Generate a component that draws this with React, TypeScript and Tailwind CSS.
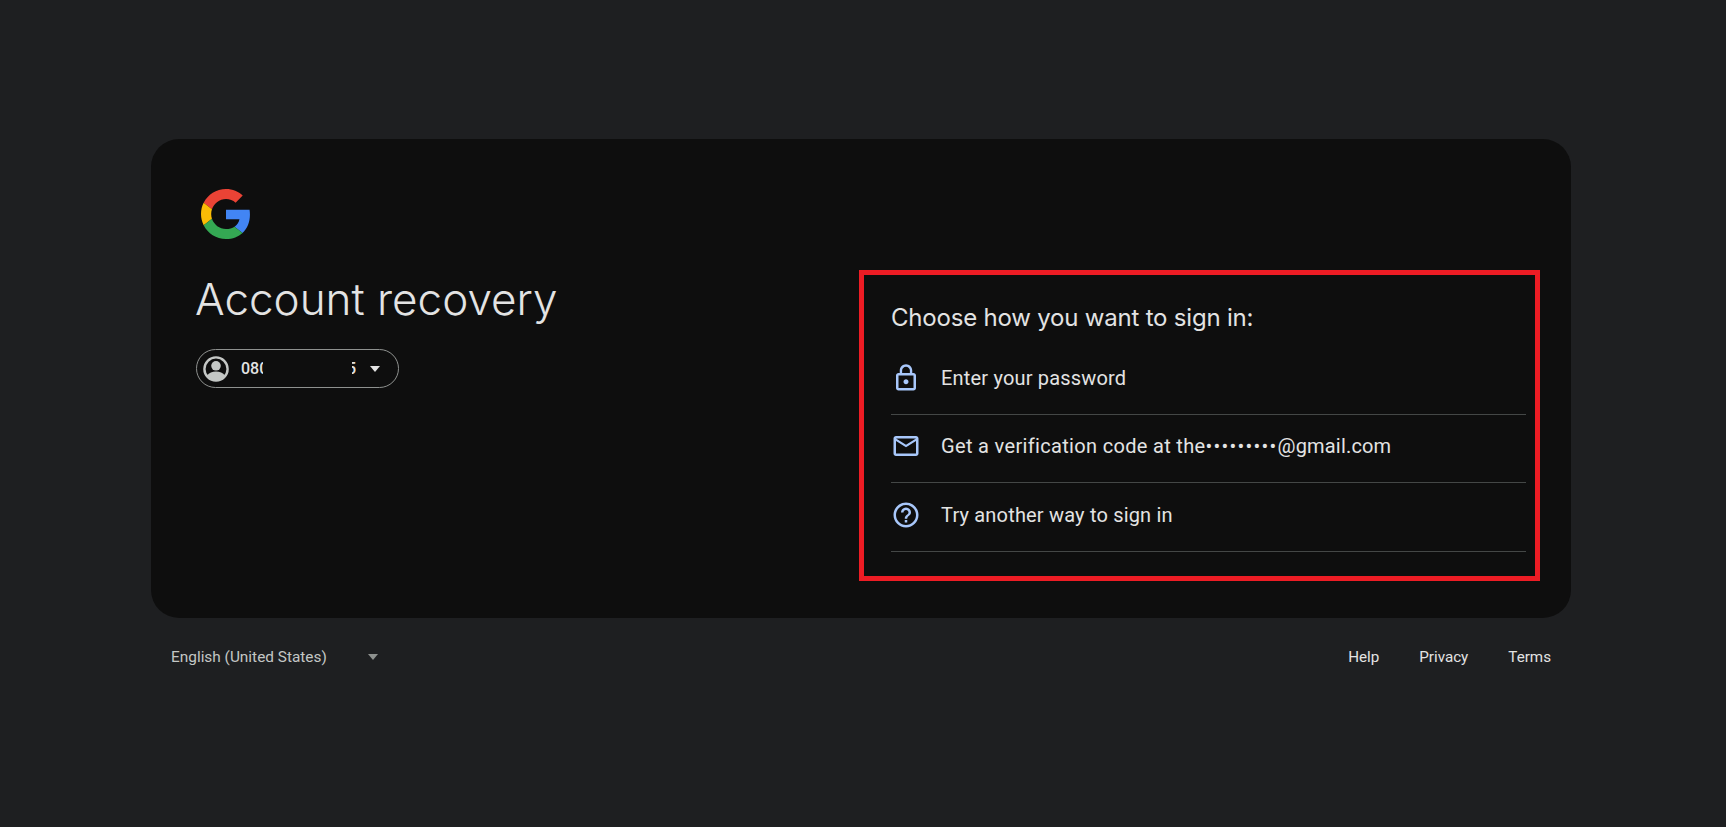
export default function App() {
  const rows = [
    {
      label: <>Enter your password</>,
      d: "M12 17c1.1 0 2-.9 2-2s-.9-2-2-2-2 .9-2 2 .9 2 2 2zm6-9h-1V6c0-2.76-2.24-5-5-5S7 3.24 7 6v2H6c-1.1 0-2 .9-2 2v10c0 1.1.9 2 2 2h12c1.1 0 2-.9 2-2V10c0-1.1-.9-2-2-2zM8.9 6c0-1.71 1.39-3.1 3.1-3.1s3.1 1.39 3.1 3.1v2H8.9V6zM18 20H6V10h12v10z",
    },
    {
      label: (
        <>
          <span className="tracking-[0.33px]">Get a verification code at the</span>
          <span className="tracking-[1.25px]">•••••••••</span>@gmail.com
        </>
      ),
      d: "M20 4H4c-1.1 0-1.99.9-1.99 2L2 18c0 1.1.9 2 2 2h16c1.1 0 2-.9 2-2V6c0-1.1-.9-2-2-2zm0 14H4V8l8 5 8-5v10zm-8-7L4 6h16l-8 5z",
    },
    {
      label: <>Try another way to sign in</>,
      d: "M11 18h2v-2h-2v2zm1-16C6.48 2 2 6.48 2 12s4.48 10 10 10 10-4.48 10-10S17.52 2 12 2zm0 18c-4.41 0-8-3.59-8-8s3.59-8 8-8 8 3.59 8 8-3.59 8-8 8zm0-14c-2.21 0-4 1.79-4 4h2c0-1.1.9-2 2-2s2 .9 2 2c0 2-3 1.75-3 5h2c0-2.25 3-2.5 3-5 0-2.21-1.79-4-4-4z",
    },
  ];

  return (
    <div className="min-h-screen bg-[#1e1f21] pt-[139px] pl-[151px] font-['Roboto',sans-serif] text-[#e3e3e3]">
      <div className="flex h-[479px] w-[1420px] items-start rounded-[28px] bg-[#0e0e0e] pl-[45px]">
        <div className="w-[663px] pt-[50px]">
          <svg viewBox="0 0 48 48" className="ml-[5px] block h-[50px] w-[50px]">
            <path fill="#EA4335" d="M24 9.5c3.54 0 6.71 1.22 9.21 3.6l6.85-6.85C35.9 2.38 30.47 0 24 0 14.62 0 6.51 5.38 2.56 13.22l7.98 6.19C12.43 13.72 17.74 9.5 24 9.5z" />
            <path fill="#4285F4" d="M46.98 24.55c0-1.57-.15-3.09-.38-4.55H24v9.02h12.94c-.58 2.96-2.26 5.48-4.78 7.18l7.73 6c4.51-4.18 7.09-10.36 7.09-17.65z" />
            <path fill="#FBBC05" d="M10.53 28.59c-.48-1.45-.76-2.99-.76-4.59s.27-3.14.76-4.59l-7.98-6.19C.92 16.46 0 20.12 0 24c0 3.88.92 7.54 2.56 10.78l7.97-6.19z" />
            <path fill="#34A853" d="M24 48c6.48 0 11.93-2.13 15.89-5.81l-7.73-6c-2.15 1.45-4.92 2.3-8.16 2.3-6.26 0-11.57-4.22-13.47-9.91l-7.98 6.19C6.51 42.62 14.62 48 24 48z" />
          </svg>
          <h1 className="mt-[32px] text-[44px] leading-[56px] font-light -ml-[1px] font-['Inter',sans-serif] whitespace-nowrap">
            Account recovery
          </h1>
          <div className="mt-[22px] flex h-[39px] w-[203px] items-center rounded-full border border-[#8e918f] pl-[6px] text-[16px] font-medium text-[#e3e3e3]">
            <svg viewBox="0 0 26 26" className="h-[26px] w-[26px] shrink-0">
              <circle cx="13" cy="13" r="11.6" fill="none" stroke="#c4c7c5" strokeWidth="2.4" />
              <circle cx="13" cy="9.800" r="4.800" fill="#c4c7c5" />
              <path d="M4 19.500c2-2.800 5.300-4 9-4s7 1.200 9 4c-2 3-5.200 5.500-9 5.500s-7-2.500-9-5.500z" fill="#c4c7c5" />
            </svg>
            <span className="ml-[12px] w-[22px] overflow-hidden whitespace-nowrap">080</span>
            <span className="ml-[89px] flex w-[4px] justify-end overflow-hidden">
              <span className="shrink-0">5</span>
            </span>
            <span className="ml-[14px] h-0 w-0 border-x-[5.5px] border-t-[6px] border-x-transparent border-t-[#e3e3e3]" />
          </div>
        </div>
        <div className="mt-[131px] h-[311px] w-[681px] border-[5px] border-[#ed1c24] pr-[9px] pl-[27px]">
          <h2 className="pt-[27px] pb-[12px] text-[24px] leading-[32px] font-normal tracking-[-0.2px] font-['Inter',sans-serif] whitespace-nowrap">
            Choose how you want to sign in:
          </h2>
          {rows.map((r, i) => (
            <div key={i} className="flex h-[68.67px] items-center border-b border-[#444746] pb-[4px]">
              <svg viewBox="0 0 24 24" className="h-[30px] w-[30px] shrink-0 fill-[#a8c7fa]">
                <path d={r.d} />
              </svg>
              <span className="ml-[20px] text-[20px] leading-[26px] tracking-[0.18px] whitespace-nowrap">{r.label}</span>
            </div>
          ))}
        </div>
      </div>
      <div className="flex w-[1420px] items-center justify-between px-[20px] pt-[29px] text-[15.4px] leading-[20px]">
        <div className="flex items-center">
          <span className="w-[197px] whitespace-nowrap text-[#c4c7c5]">English (United States)</span>
          <span className="h-0 w-0 border-x-[5.5px] border-t-[6px] border-x-transparent border-t-[#8e918f]" />
        </div>
        <div className="flex gap-[40px] text-[15.2px]">
          <span>Help</span>
          <span>Privacy</span>
          <span>Terms</span>
        </div>
      </div>
    </div>
  );
}
